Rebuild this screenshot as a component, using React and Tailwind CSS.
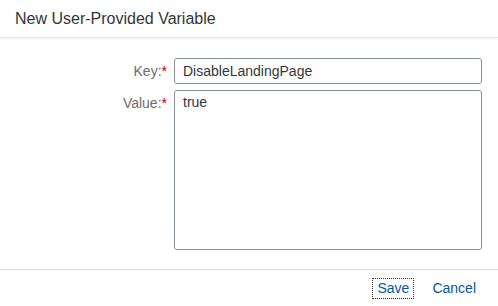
import React from 'react';

const font = { fontFamily: '"Liberation Sans", Arial, sans-serif' };

function Label({ children }) {
  return (
    <label className="w-[174px] shrink-0 pr-[7px] text-right text-[14px] text-[#6a6d70] leading-[26px]">
      {children}:<span className="text-[#bb0000]">*</span>
    </label>
  );
}

export default function App() {
  return (
    <div className="w-[498px] h-[306px] bg-white flex flex-col" style={font}>
      {/* Header */}
      <div className="h-[38px] shrink-0 flex items-center px-[15px] border-b border-[#e5e5e5] shadow-[0_1px_2px_rgba(0,0,0,0.08)]">
        <h1 className="text-[16px] text-[#32363a] pt-[1px]">New User-Provided Variable</h1>
      </div>

      {/* Form */}
      <div className="flex-1 flex flex-col gap-[6px] pt-[20px] pr-[16px]">
        <div className="flex items-start">
          <Label>Key</Label>
          <input
            defaultValue="DisableLandingPage"
            className="flex-1 h-[26px] rounded-[3px] border border-[#89919a] px-[8px] text-[14px] text-[#32363a] outline-none"
            style={font}
          />
        </div>
        <div className="flex items-start">
          <Label>Value</Label>
          <textarea
            defaultValue="true"
            className="flex-1 h-[160px] resize-none rounded-[3px] border border-[#89919a] px-[8px] py-[2px] text-[14px] leading-[18px] text-[#32363a] outline-none"
            style={font}
          />
        </div>
      </div>

      {/* Footer */}
      <div className="h-[37px] shrink-0 border-t border-[#d9d9d9] flex items-center justify-end gap-[18px] pr-[22px]">
        <button className="h-[21px] px-[4px] border border-dotted border-[#32363a] text-[14px] text-[#0854a0] leading-none" style={font}>
          Save
        </button>
        <button className="text-[14px] text-[#0854a0] leading-none" style={font}>
          Cancel
        </button>
      </div>
    </div>
  );
}
